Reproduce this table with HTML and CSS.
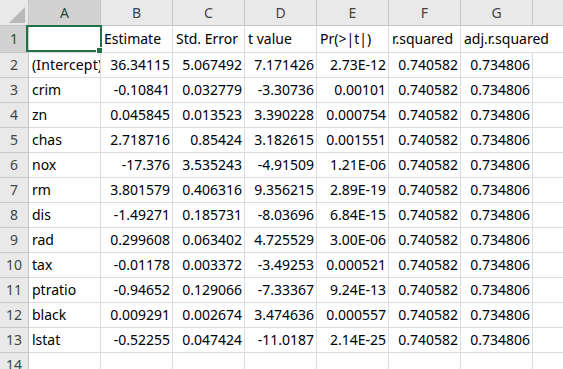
FILE: index.html
```html
<!DOCTYPE html>
<html lang="ja">
<head>
<meta charset="utf-8">
<title>Sheet</title>
<link rel="stylesheet" href="styles.css">
</head>
<body>
<div class="sheet">
  <div class="grid">
    <div class="hd corner"><svg class="tri" width="16" height="16" viewBox="0 0 16 16"><polygon points="16,0 16,16 0,16" fill="#b9b9b9"/></svg></div>
    <div class="hd col sel">A</div>
    <div class="hd col">B</div>
    <div class="hd col">C</div>
    <div class="hd col">D</div>
    <div class="hd col">E</div>
    <div class="hd col">F</div>
    <div class="hd col">G</div>
    <div class="hd col"></div>

    <div class="hd rn sel">1</div>
    <div class="c"></div><div class="c">Estimate</div><div class="c">Std. Error</div><div class="c">t value</div><div class="c">Pr(&gt;|t|)</div><div class="c">r.squared</div><div class="c spill">adj.r.squared</div><div class="c"></div>

    <div class="hd rn">2</div>
    <div class="c clip">(Intercept)</div><div class="c n">36.34115</div><div class="c n">5.067492</div><div class="c n">7.171426</div><div class="c n">2.73E-12</div><div class="c n">0.740582</div><div class="c n">0.734806</div><div class="c"></div>

    <div class="hd rn">3</div>
    <div class="c">crim</div><div class="c n">-0.10841</div><div class="c n">0.032779</div><div class="c n">-3.30736</div><div class="c n">0.00101</div><div class="c n">0.740582</div><div class="c n">0.734806</div><div class="c"></div>

    <div class="hd rn">4</div>
    <div class="c">zn</div><div class="c n">0.045845</div><div class="c n">0.013523</div><div class="c n">3.390228</div><div class="c n">0.000754</div><div class="c n">0.740582</div><div class="c n">0.734806</div><div class="c"></div>

    <div class="hd rn">5</div>
    <div class="c">chas</div><div class="c n">2.718716</div><div class="c n">0.85424</div><div class="c n">3.182615</div><div class="c n">0.001551</div><div class="c n">0.740582</div><div class="c n">0.734806</div><div class="c"></div>

    <div class="hd rn">6</div>
    <div class="c">nox</div><div class="c n">-17.376</div><div class="c n">3.535243</div><div class="c n">-4.91509</div><div class="c n">1.21E-06</div><div class="c n">0.740582</div><div class="c n">0.734806</div><div class="c"></div>

    <div class="hd rn">7</div>
    <div class="c">rm</div><div class="c n">3.801579</div><div class="c n">0.406316</div><div class="c n">9.356215</div><div class="c n">2.89E-19</div><div class="c n">0.740582</div><div class="c n">0.734806</div><div class="c"></div>

    <div class="hd rn">8</div>
    <div class="c">dis</div><div class="c n">-1.49271</div><div class="c n">0.185731</div><div class="c n">-8.03696</div><div class="c n">6.84E-15</div><div class="c n">0.740582</div><div class="c n">0.734806</div><div class="c"></div>

    <div class="hd rn">9</div>
    <div class="c">rad</div><div class="c n">0.299608</div><div class="c n">0.063402</div><div class="c n">4.725529</div><div class="c n">3.00E-06</div><div class="c n">0.740582</div><div class="c n">0.734806</div><div class="c"></div>

    <div class="hd rn">10</div>
    <div class="c">tax</div><div class="c n">-0.01178</div><div class="c n">0.003372</div><div class="c n">-3.49253</div><div class="c n">0.000521</div><div class="c n">0.740582</div><div class="c n">0.734806</div><div class="c"></div>

    <div class="hd rn">11</div>
    <div class="c">ptratio</div><div class="c n">-0.94652</div><div class="c n">0.129066</div><div class="c n">-7.33367</div><div class="c n">9.24E-13</div><div class="c n">0.740582</div><div class="c n">0.734806</div><div class="c"></div>

    <div class="hd rn">12</div>
    <div class="c">black</div><div class="c n">0.009291</div><div class="c n">0.002674</div><div class="c n">3.474636</div><div class="c n">0.000557</div><div class="c n">0.740582</div><div class="c n">0.734806</div><div class="c"></div>

    <div class="hd rn">13</div>
    <div class="c">lstat</div><div class="c n">-0.52255</div><div class="c n">0.047424</div><div class="c n">-11.0187</div><div class="c n">2.14E-25</div><div class="c n">0.740582</div><div class="c n">0.734806</div><div class="c"></div>

    <div class="hd rn">14</div>
    <div class="c"></div><div class="c"></div><div class="c"></div><div class="c"></div><div class="c"></div><div class="c"></div><div class="c"></div><div class="c"></div>
  </div>
  <div class="selection"></div>
  <div class="handle"></div>
</div>
</body>
</html>
```
FILE: styles.css
```css
html, body {
  margin: 0;
  padding: 0;
  background: #ffffff;
}
body {
  width: 563px;
  height: 369px;
  overflow: hidden;
  font-family: "Noto Sans", "Liberation Sans", Arial, sans-serif;
  font-size: 14px;
  color: #000;
}
.sheet {
  position: relative;
  width: 563px;
  height: 369px;
  overflow: hidden;
}
.grid {
  display: grid;
  grid-template-columns: 29px repeat(8, 72px);
  grid-template-rows: 26px 27px repeat(13, 25px);
  width: 605px;
}
.grid > div {
  box-sizing: border-box;
  border-right: 1px solid #dadcdd;
  border-bottom: 1px solid #dadcdd;
  white-space: nowrap;
  overflow: hidden;
}
.hd {
  background: #e9e9e9;
  color: #444;
  text-align: center;
  line-height: 25px;
  font-size: 14px;
}
.grid > .hd {
  border-right-color: #c6c6c6;
  border-bottom-color: #c6c6c6;
}
.hd.sel {
  background: #d2d2d2;
  color: #1f4d37;
}
.corner {
  display: flex;
  align-items: flex-end;
  justify-content: flex-end;
  padding: 0 3px 2px 0;
}
.tri {
  display: block;
}
.rn {
  line-height: 24px;
}
.grid > .rn.sel {
  line-height: 26px;
}
.c {
  padding: 0 2px 0 3px;
  line-height: 24px;
}
.grid > .clip {
  padding-right: 0;
  letter-spacing: 0.15px;
}
.grid > div:nth-child(n+10):nth-child(-n+18) {
  line-height: 26px;
}
.n {
  text-align: right;
}
.grid > .spill {
  overflow: visible;
  border-right-color: transparent;
}
.selection {
  position: absolute;
  left: 26px;
  top: 25px;
  width: 72px;
  height: 23px;
  border: 2px solid #217346;
}
.handle {
  position: absolute;
  left: 96px;
  top: 47px;
  width: 5px;
  height: 5px;
  background: #217346;
  border: 1px solid #ffffff;
}
```
